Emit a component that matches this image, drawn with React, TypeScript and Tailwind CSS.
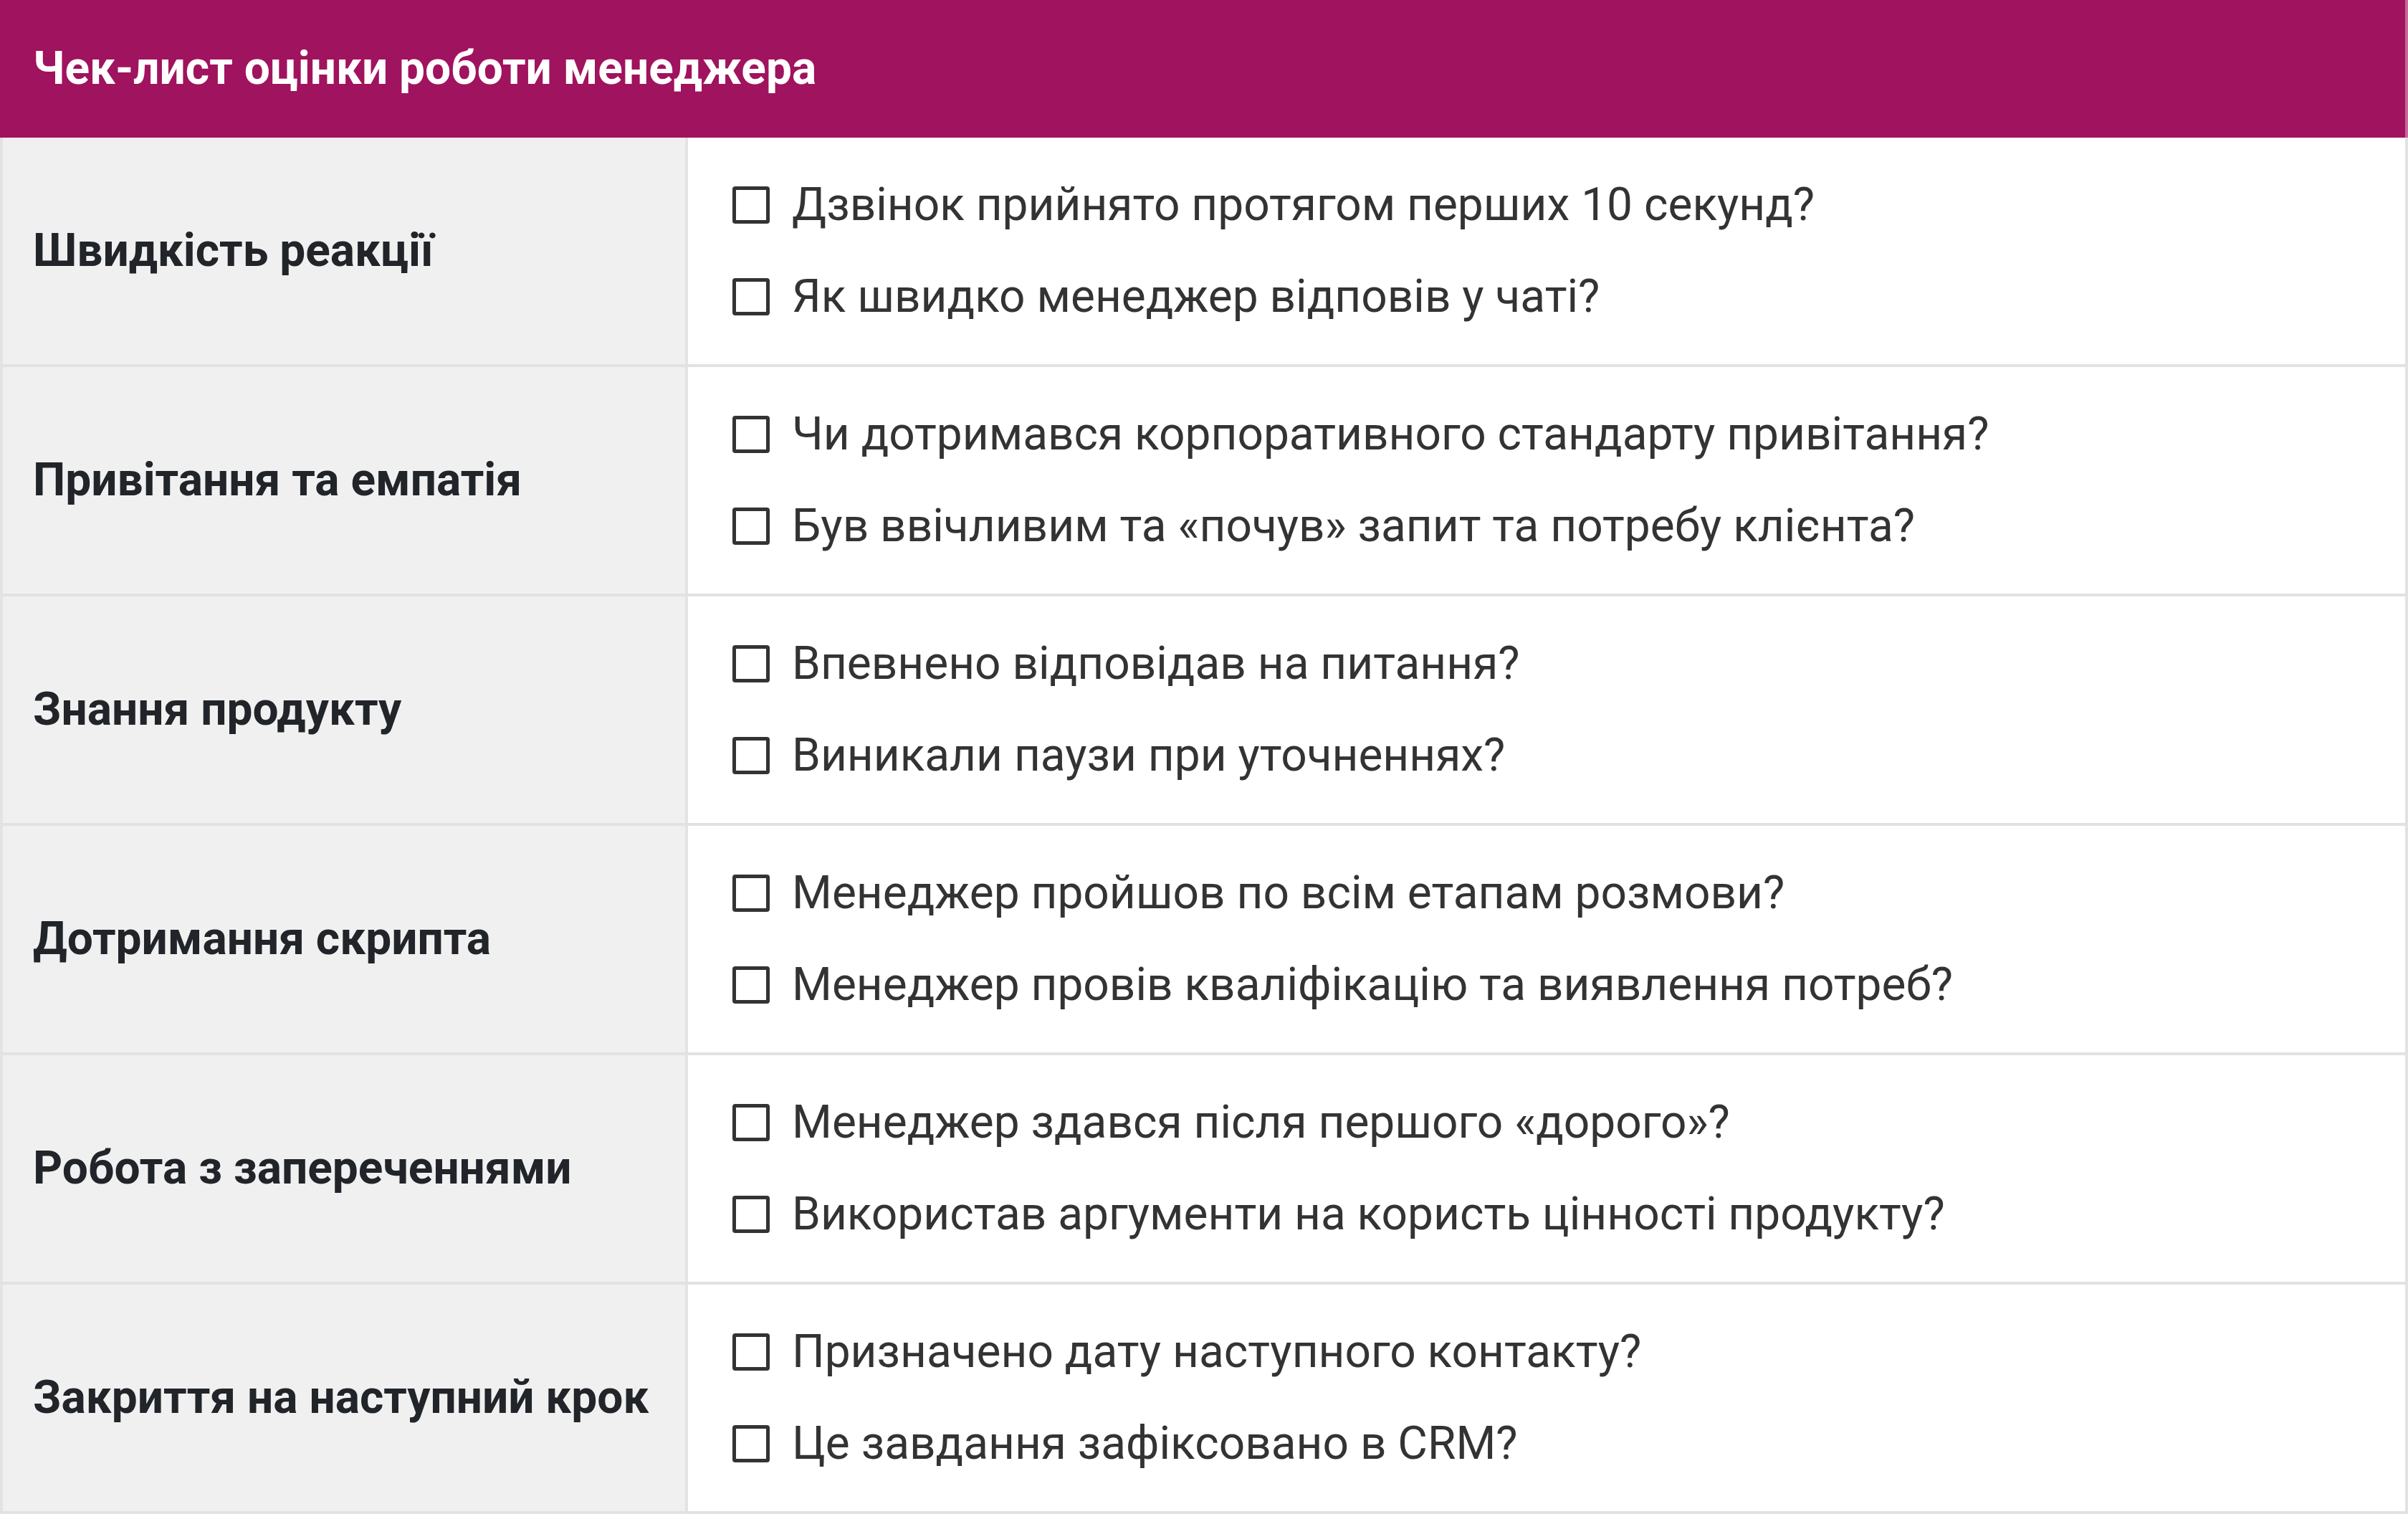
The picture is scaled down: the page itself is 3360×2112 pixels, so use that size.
import React from 'react';

type Section = { title: string; items: string[] };

const sections: Section[] = [
  {
    title: 'Швидкість реакції',
    items: ['Дзвінок прийнято протягом перших 10 секунд?', 'Як швидко менеджер відповів у чаті?'],
  },
  {
    title: 'Привітання та емпатія',
    items: ['Чи дотримався корпоративного стандарту привітання?', 'Був ввічливим та «почув» запит та потребу клієнта?'],
  },
  {
    title: 'Знання продукту',
    items: ['Впевнено відповідав на питання?', 'Виникали паузи при уточненнях?'],
  },
  {
    title: 'Дотримання скрипта',
    items: ['Менеджер пройшов по всім етапам розмови?', 'Менеджер провів кваліфікацію та виявлення потреб?'],
  },
  {
    title: 'Робота з запереченнями',
    items: ['Менеджер здався після першого «дорого»?', 'Використав аргументи на користь цінності продукту?'],
  },
  {
    title: 'Закриття на наступний крок',
    items: ['Призначено дату наступного контакту?', 'Це завдання зафіксовано в CRM?'],
  },
];

function Row({ section }: { section: Section }) {
  return (
    <div className="flex h-[320px] border-b-4 border-[#e2e2e2]">
      <div className="w-[960px] shrink-0 flex items-center bg-[#f0f0f0] border-l-4 border-r-4 border-[#e3e3e3] pl-[42px]">
        <span className="text-[64px] font-bold text-[#212529] leading-none">{section.title}</span>
      </div>
      <div className="flex-1 flex flex-col justify-center gap-[76px] bg-white border-r-4 border-[#e2e2e2] pl-[62px]">
        {section.items.map((item) => (
          <div key={item} className="flex items-center gap-[31px]">
            <span className="w-[52px] h-[52px] shrink-0 border-[5px] border-[#333333] rounded-[4px]" />
            <span className="text-[64px] text-[#333333] leading-[52px]">{item}</span>
          </div>
        ))}
      </div>
    </div>
  );
}

export default function App() {
  return (
    <div className="w-[3360px] h-[2112px] bg-white" style={{ fontFamily: 'Roboto, "Noto Sans", sans-serif' }}>
      <div className="flex h-[192px] items-center bg-[#a0135e] border-r-4 border-[#c5689c] pl-[46px]">
        <h1 className="text-[64px] font-bold text-white leading-none">Чек-лист оцінки роботи менеджера</h1>
      </div>
      {sections.map((s) => (
        <Row key={s.title} section={s} />
      ))}
    </div>
  );
}
